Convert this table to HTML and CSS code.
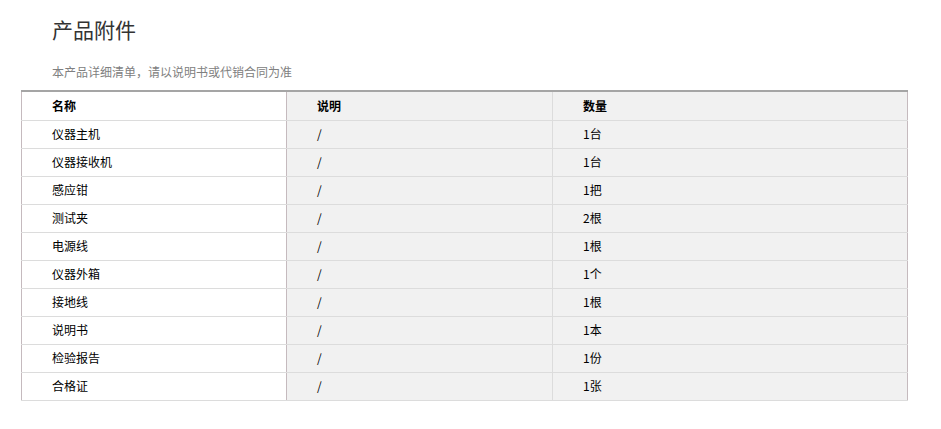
FILE: index.html
```html
<!DOCTYPE html>
<html lang="zh-CN">
<head>
<meta charset="utf-8">
<title>产品附件</title>
<link rel="stylesheet" href="styles.css">
</head>
<body>
<div class="page">
  <h2 class="title">产品附件</h2>
  <p class="subtitle">本产品详细清单，请以说明书或代销合同为准</p>
  <table class="parts">
    <colgroup>
      <col class="c1"><col class="c2"><col class="c3">
    </colgroup>
    <thead>
      <tr><th>名称</th><th>说明</th><th>数量</th></tr>
    </thead>
    <tbody>
      <tr><td>仪器主机</td><td>/</td><td>1台</td></tr>
      <tr><td>仪器接收机</td><td>/</td><td>1台</td></tr>
      <tr><td>感应钳</td><td>/</td><td>1把</td></tr>
      <tr><td>测试夹</td><td>/</td><td>2根</td></tr>
      <tr><td>电源线</td><td>/</td><td>1根</td></tr>
      <tr><td>仪器外箱</td><td>/</td><td>1个</td></tr>
      <tr><td>接地线</td><td>/</td><td>1根</td></tr>
      <tr><td>说明书</td><td>/</td><td>1本</td></tr>
      <tr><td>检验报告</td><td>/</td><td>1份</td></tr>
      <tr><td>合格证</td><td>/</td><td>1张</td></tr>
    </tbody>
  </table>
</div>
</body>
</html>
```

FILE: styles.css
```css
html, body {
  margin: 0;
  padding: 0;
  background: #ffffff;
}
body {
  font-family: "Noto Sans CJK SC", "Noto Sans", sans-serif;
  color: #000;
}
.page {
  padding: 17px 0 0 21px;
  width: 886px;
}
.title {
  margin: 0;
  padding-left: 31px;
  font-size: 21px;
  line-height: 24px;
  font-weight: normal;
  color: #333;
}
.subtitle {
  margin: 23px 0 0 0;
  padding-left: 31px;
  font-size: 12px;
  line-height: 16px;
  color: #808080;
}
.parts {
  margin-top: 10px;
  width: 886px;
  border-collapse: collapse;
  table-layout: fixed;
  font-size: 12px;
}
.c1 { width: 265px; }
.c2 { width: 266px; }
.c3 { width: 355px; }
.parts th, .parts td {
  height: 28px;
  padding: 0 0 0 30px;
  text-align: left;
  border-bottom: 1px solid #dcdcdc;
  line-height: 16px;
  box-sizing: border-box;
}
.parts th {
  height: 29px;
  padding-top: 1px;
  font-weight: bold;
  border-top: 2px solid #a5a5a5;
}
.parts th:nth-child(2), .parts td:nth-child(2),
.parts th:nth-child(3), .parts td:nth-child(3) {
  background: #f1f1f1;
}
.parts th:first-child, .parts td:first-child {
  border-left: 1px solid #c5babe;
  border-right: 1px solid #c5babe;
}
.parts th:nth-child(2), .parts td:nth-child(2) {
  border-right: 1px solid #dcdcdc;
}
.parts th:last-child, .parts td:last-child {
  border-right: 1px solid #c5babe;
}
```
